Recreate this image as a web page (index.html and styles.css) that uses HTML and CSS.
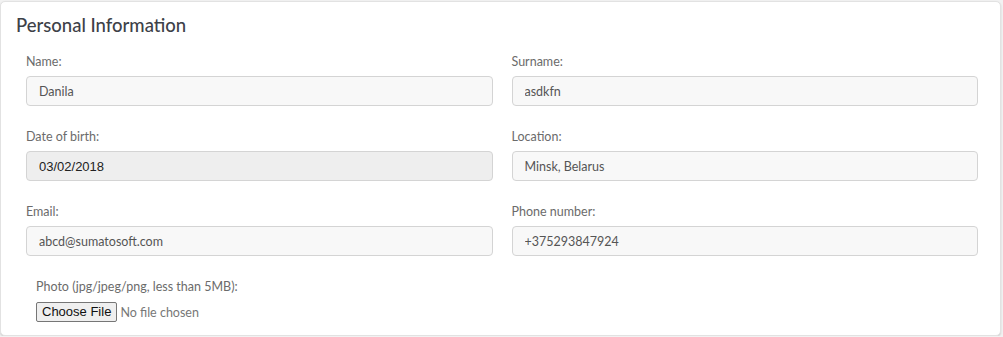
FILE: index.html
```html
<!DOCTYPE html>
<html lang="en">
<head>
  <meta charset="UTF-8" />
  <meta name="viewport" content="width=device-width, initial-scale=1.0"/>
  <title>Personal Information</title>
  <link rel="stylesheet" href="styles.css">
</head>
<body>

<div class="card">
  <h2 class="card-title">Personal Information</h2>

  <!-- Fields -->
  <div class="fields">
    <div class="field">
      <label for="name">Name:</label>
      <input type="text" id="name" value="Danila" />
    </div>
    <div class="field">
      <label for="surname">Surname:</label>
      <input type="text" id="surname" value="asdkfn" />
    </div>
    <div class="field">
      <label for="birth">Date of birth:</label>
      <input type="text" id="birth" class="date" value="03/02/2018" readonly />
    </div>
    <div class="field">
      <label for="location">Location:</label>
      <input type="text" id="location" value="Minsk, Belarus" />
    </div>
    <div class="field">
      <label for="email">Email:</label>
      <input type="text" id="email" value="abcd@sumatosoft.com" />
    </div>
    <div class="field">
      <label for="phone">Phone number:</label>
      <input type="text" id="phone" value="+375293847924" />
    </div>
  </div>

  <!-- Photo -->
  <div class="photo">
    <label for="photo">Photo (jpg/jpeg/png, less than 5MB):</label>
    <div class="file-row">
      <button type="button" class="file-btn">Choose File</button>
      <span class="file-name">No file chosen</span>
    </div>
  </div>
</div>

</body>
</html>
```

FILE: styles.css
```css
body {
  margin: 0;
  font-family: 'Lato', sans-serif;
  background: #f2f2f2;
}

.card {
  background: #fff;
  border: 1px solid #e2e2e2;
  border-radius: 5px;
  box-shadow: 0 1px 2px rgba(0, 0, 0, 0.15);
  width: 1001px;
  height: 335px;
  box-sizing: border-box;
  margin: 1px 0 0 0;
  padding: 10px 22px 0 25px;
}

.card-title {
  margin: 0 0 0 -10px;
  font-size: 18.5px;
  font-weight: 500;
  color: #3d4148;
  line-height: 26px;
}

.fields {
  display: grid;
  grid-template-columns: 1fr 1fr;
  column-gap: 19px;
  row-gap: 23px;
  margin-top: 16px;
}

.field label {
  display: block;
  font-size: 12.5px;
  color: #6b6b6b;
  line-height: 16px;
  margin-bottom: 6px;
}

.field input {
  display: block;
  width: 100%;
  box-sizing: border-box;
  height: 30px;
  padding: 0 12px;
  font-family: 'Lato', sans-serif;
  font-size: 12.5px;
  color: #555;
  background: #f8f8f8;
  border: 1px solid #d4d4d4;
  border-radius: 4px;
  outline: none;
}

.field input.date {
  background: #eeeeee;
  color: #222;
  font-family: 'Liberation Sans', Arial, sans-serif;
  font-size: 13px;
}

.photo {
  margin: 23px 0 0 10px;
}

.photo label {
  display: block;
  font-size: 12.5px;
  color: #6b6b6b;
  line-height: 16px;
  margin-bottom: 7px;
}

.file-row {
  display: flex;
  align-items: center;
}

.file-btn {
  font-family: 'Liberation Sans', Arial, sans-serif;
  font-size: 13px;
  color: #111;
  background: #efefef;
  border: 1px solid #767676;
  border-radius: 2px;
  padding: 1px 5px;
  height: 20px;
  line-height: 16px;
}

.file-name {
  margin-left: 3px;
  font-size: 12.5px;
  color: #777;
}
```
